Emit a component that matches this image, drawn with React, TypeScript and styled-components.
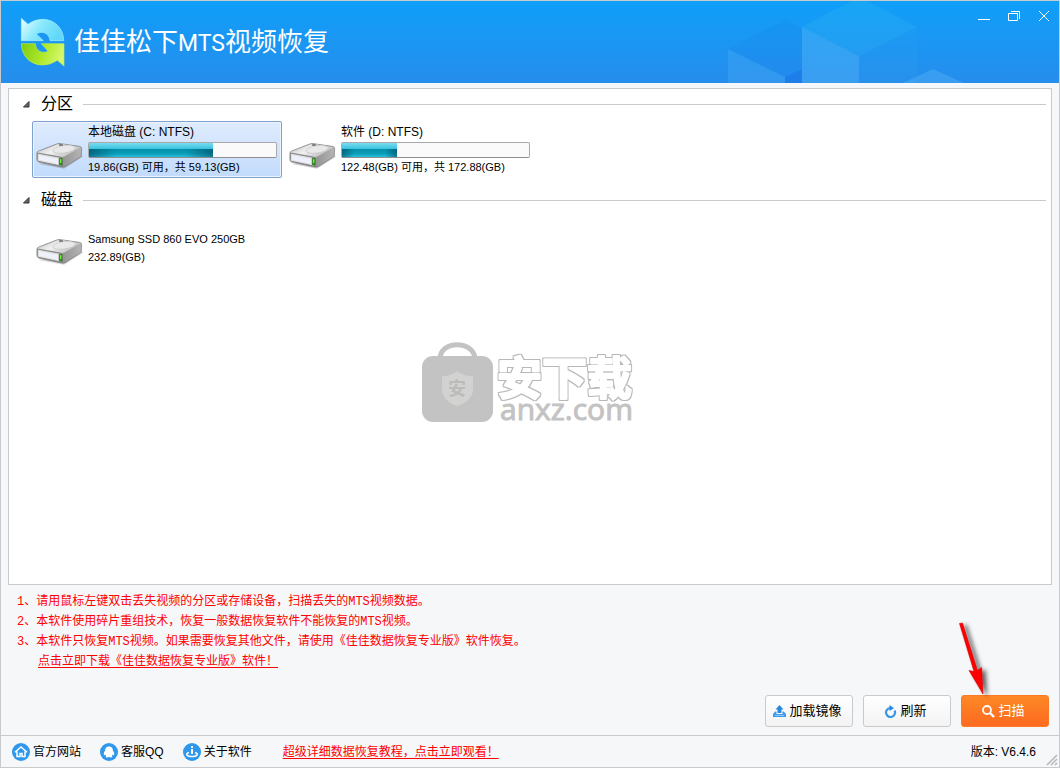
import React, { useState } from "react";
import styled, { createGlobalStyle, css } from "styled-components";

const GlobalStyle = createGlobalStyle`
  *, *::before, *::after { box-sizing: border-box; }
  body {
    margin: 0;
    background: #f6f7f9;
    color: #000;
    font: 12px/18px "Liberation Sans", "Noto Sans CJK SC", sans-serif;
  }
  button { font: inherit; color: inherit; cursor: pointer; }
  h1, h2, p, ol { margin: 0; padding: 0; font-weight: 400; }
  svg { display: block; flex: none; }
`;

const line = "#c8cacd";

const AppWindow = styled.div`
  display: flex;
  flex-direction: column;
  min-height: 100vh;
  border: 1px solid ${line};
`;

const Header = styled.header`
  position: relative;
  display: flex;
  align-items: flex-start;
  justify-content: space-between;
  height: 82px;
  overflow: hidden;
  background: linear-gradient(#0f9ff9, #268dec);
`;

const HeaderArt = styled.svg`
  position: absolute;
  top: 0;
  right: 0;
`;

const Brand = styled.div`
  display: flex;
  align-items: center;
  gap: 8px;
  padding: 15px 0 0 19px;
`;

const Title = styled.h1`
  color: #fff;
  font: 400 26px/48px "Noto Sans CJK SC", sans-serif;
  white-space: nowrap;
`;

const TitleLatin = styled.span`
  font: 400 23px/48px Roboto, sans-serif;
`;

const WindowControls = styled.div`
  position: relative;
  display: flex;
  padding-top: 5px;
`;

const WindowButton = styled.button`
  display: grid;
  place-items: center;
  width: 30px;
  height: 20px;
  padding: 0;
  border: 0;
  background: none;
`;

const Panel = styled.main`
  position: relative;
  flex: 1;
  margin: 5px 7px 0;
  padding: 6px 5px;
  border: 1px solid ${line};
  background: #fff;
`;

const Section = styled.section`
  min-height: 96px;
`;

const SectionHeading = styled.h2`
  display: flex;
  align-items: center;
  font-size: 16px;
  line-height: 18px;
  &::after {
    content: "";
    flex: 1;
    height: 1px;
    margin-left: 10px;
    background: ${line};
  }
`;

const SectionToggle = styled.button`
  display: flex;
  align-items: center;
  gap: 11px;
  padding: 0 0 0 8px;
  border: 0;
  background: none;
`;

const DriveList = styled.div`
  display: flex;
  flex-wrap: wrap;
  gap: 3px;
  padding: 8px 0 0 18px;
`;

const DriveButton = styled.button<{ $selected: boolean }>`
  display: flex;
  align-items: flex-end;
  gap: 5px;
  width: 250px;
  height: 57px;
  padding: 0 4px 0 3px;
  border: 1px solid transparent;
  border-radius: 2px;
  background: none;
  text-align: left;
  & > svg { margin-bottom: 7px; }
  ${(p) =>
    p.$selected &&
    css`
      border-color: #7da2ce;
      background: linear-gradient(#dfebfd, #c2dbfc);
      box-shadow: inset 0 0 0 1px #ebf3fd;
    `}
`;

const DriveInfo = styled.span<{ $compact: boolean }>`
  display: flex;
  flex: 1;
  flex-direction: column;
  gap: 1px;
  padding-bottom: ${(p) => (p.$compact ? 7 : 1)}px;
`;

const DriveText = styled.span<{ $small?: boolean }>`
  font-size: ${(p) => (p.$small ? 11 : 12)}px;
  line-height: 17px;
  white-space: nowrap;
`;

const Meter = styled.span`
  display: block;
  height: 16px;
  border: 1px solid #a9a9a9;
  border-bottom-color: #8e8e8e;
  border-radius: 2px;
  background: #fafafa;
`;

const MeterFill = styled.span`
  display: block;
  height: 100%;
  background:
    linear-gradient(90deg, rgba(0, 55, 80, 0.5), transparent 22%, transparent 78%, rgba(0, 55, 80, 0.5)) 0 100% / 100% 60% no-repeat,
    linear-gradient(#7adcf0, #35c2de 44%, #0790ab 46%, #0a9db8 75%, #28bfdb);
`;

const Watermark = styled.svg`
  position: absolute;
  top: 250px;
  left: 50%;
  margin-left: -110px;
  pointer-events: none;
`;

const Notes = styled.section`
  padding: 7px 17px 0 16px;
  color: #f00;
  font: 12px/20px "Liberation Mono", "Noto Sans CJK SC", monospace;
`;

const NoteList = styled.ol`
  list-style: none;
`;

const RedLink = styled.a<{ $indent?: boolean }>`
  margin-left: ${(p) => (p.$indent ? 21 : 0)}px;
  color: #f00;
  text-underline-offset: 2px;
  white-space: nowrap;
`;

const Actions = styled.div`
  display: flex;
  justify-content: flex-end;
  gap: 10px;
  padding: 23px 10px 8px;
`;

const ActionButton = styled.button<{ $primary?: boolean }>`
  position: relative;
  display: flex;
  align-items: center;
  justify-content: center;
  gap: 3px;
  width: 88px;
  height: 32px;
  padding: 0 3px 0 0;
  border: 1px solid ${(p) => (p.$primary ? "#fd7a22" : line)};
  border-radius: 3px;
  background: ${(p) => (p.$primary ? "linear-gradient(#fd8826, #fd6a20)" : "linear-gradient(#fff, #f3f3f3)")};
  color: ${(p) => (p.$primary ? "#fff" : "#000")};
  font-size: 13px;
  white-space: nowrap;
`;

const Arrow = styled.svg`
  position: absolute;
  top: -75px;
  left: -6px;
  pointer-events: none;
`;

const Footer = styled.footer`
  position: relative;
  display: flex;
  align-items: center;
  height: 32px;
  padding: 0 23px 0 11px;
  border-top: 1px solid ${line};
`;

const FooterNav = styled.nav`
  display: flex;
  gap: 19px;
  margin-right: 31px;
`;

const FooterLink = styled.a`
  display: flex;
  align-items: center;
  gap: 3px;
  color: #000;
  text-decoration: none;
  white-space: nowrap;
`;

const Version = styled.span`
  margin-left: auto;
`;

const Grip = styled.svg`
  position: absolute;
  right: 1px;
  bottom: 1px;
`;

function Logo() {
  return (
    <svg width="46" height="50" viewBox="60 50 138 150" aria-hidden="true">
      <defs>
        <linearGradient id="logoTop" x1="0" y1="0" x2="1" y2="0.4">
          <stop offset="0" stopColor="#eaffff" />
          <stop offset="0.5" stopColor="#8be9fc" />
          <stop offset="1" stopColor="#62d8fb" />
        </linearGradient>
        <linearGradient id="logoBottom" x1="0" y1="0" x2="1" y2="0.2">
          <stop offset="0" stopColor="#7dcb13" />
          <stop offset="0.6" stopColor="#b0e92c" />
          <stop offset="1" stopColor="#d4f76a" />
        </linearGradient>
      </defs>
      <path d="M64 54 84 72Q103 57 128 57C165 57 191 86 191 121H150C149 106 138 96 124 96Q115 96 109 101L130 121H64Z" fill="url(#logoTop)" stroke="#a5f0ff" strokeWidth="2" />
      <path d="M192 197 172 180Q152 194 128 194C91 194 65 167 64 130H106C107 145 117 156 132 156Q140 156 144 152L124 130H192Z" fill="url(#logoBottom)" stroke="#b9ee4c" strokeWidth="2" />
    </svg>
  );
}

function DriveIcon() {
  return (
    <svg width="47" height="28" viewBox="0 -2 141 84" aria-hidden="true">
      <defs>
        <linearGradient id="driveTop" x1="0" y1="0" x2="1" y2="0.5">
          <stop offset="0" stopColor="#c0c0c0" />
          <stop offset="0.5" stopColor="#f0f0f0" />
          <stop offset="1" stopColor="#bdbdbd" />
        </linearGradient>
        <linearGradient id="driveSide" x1="0" y1="0" x2="1" y2="0">
          <stop offset="0" stopColor="#d6d6d6" />
          <stop offset="0.5" stopColor="#8e8e8e" />
          <stop offset="1" stopColor="#b5b5b5" />
        </linearGradient>
      </defs>
      <path d="M8 64 84 78 141 42 136 36Z" fill="#555" opacity=".25" />
      <path d="M3 30Q3 27 8 25L62 4Q68 2 74 3L130 11Q137 12 137 18L136 37Q136 41 131 44L91 70Q84 75 77 73L8 58Q3 56 3 51Z" fill="url(#driveSide)" stroke="#777" strokeWidth="2" />
      <path d="M5 29 64 5Q69 3 75 4L134 14 88 40Q82 44 74 42Z" fill="url(#driveTop)" />
      <ellipse cx="84" cy="20" rx="34" ry="11" transform="rotate(-8 84 20)" fill="#e9e9e9" stroke="#c4c4c4" strokeWidth="2" />
      <ellipse cx="75" cy="7" rx="7" ry="3" fill="#777" />
      <path d="M4 31 78 45V71L7 56Q4 55 4 50Z" fill="#dedede" stroke="#868686" strokeWidth="3" />
      <path d="M9 37 66 48V64L9 52Z" fill="#eef0fa" />
      <path d="M70 47 78 48V68L70 66Z" fill="#24a80e" stroke="#245a1c" strokeWidth="2" />
      <path d="M72 50H76V60H72Z" fill="#7cf44a" />
    </svg>
  );
}

function HomeIcon() {
  return (
    <svg width="18" height="18" viewBox="0 0 18 18" aria-hidden="true">
      <circle cx="9" cy="9" r="9" fill="#2f97ec" />
      <path d="M3 9.200 9 4l6 5.200M5 8.500v5h3v-3h2v3h3v-5" fill="none" stroke="#fff" strokeWidth="1.500" />
    </svg>
  );
}

function PenguinIcon() {
  return (
    <svg width="18" height="18" viewBox="0 0 18 18" aria-hidden="true">
      <circle cx="9" cy="9" r="9" fill="#2f97ec" />
      <path d="M9 3.500C6.200 3.500 5 5.500 5.100 7.700C4 9 3.300 11 4 12.200C4.400 12.400 4.900 12 5.300 11.500C5.500 12.200 5.700 12.600 6.100 13C5.300 13.700 5.700 14.500 7 14.500C8 14.500 8.600 14.300 9 14C9.400 14.300 10 14.500 11 14.500C12.300 14.500 12.700 13.700 11.900 13C12.300 12.600 12.500 12.200 12.700 11.500C13.100 12 13.600 12.400 14 12.200C14.700 11 14 9 12.900 7.700C13 5.500 11.800 3.500 9 3.500Z" fill="#fff" />
    </svg>
  );
}

function AboutIcon() {
  return (
    <svg width="18" height="18" viewBox="0 0 18 18" aria-hidden="true">
      <circle cx="9" cy="9" r="9" fill="#2f97ec" />
      <path d="M8 3h2v2H8ZM8 6h2v5H8Z" fill="#fff" />
      <path d="M6 9.500C2.500 10.500 3 13.500 9 13.500s6.500-3 3-4" fill="none" stroke="#fff" strokeWidth="1.600" />
    </svg>
  );
}

function UploadIcon() {
  return (
    <svg width="13" height="12" viewBox="0 0 13 12" aria-hidden="true">
      <path d="M6.500 0 10.500 4.500H8.500V8H4.500V4.500H2.500Z" fill="#2589e0" />
      <path d="M2.300 6.500H3.500V9H9.500V6.500H10.700L13 9V12H0V9Z" fill="#3c9aea" />
      <path d="M2 10.500H11" stroke="#cbe6fb" strokeWidth=".600" />
    </svg>
  );
}

function RefreshIcon() {
  return (
    <svg width="13" height="13" viewBox="0 0 13 13" aria-hidden="true">
      <path d="M10.600 5.500A4.500 4.500 0 1 1 6 3" fill="none" stroke="#3797e8" strokeWidth="2.200" />
      <path d="M5.500 0 10 3.200 5.500 6Z" fill="#2589e0" />
    </svg>
  );
}

function SearchIcon() {
  return (
    <svg width="13" height="13" viewBox="0 0 13 13" aria-hidden="true">
      <circle cx="5" cy="5" r="4" fill="none" stroke="#fff" strokeWidth="1.800" />
      <path d="M8 8 12 12" stroke="#fff" strokeWidth="2.400" />
    </svg>
  );
}

type Drive = { id: string; name: string; free?: number; total: number };

const partitions: Drive[] = [
  { id: "c", name: "本地磁盘 (C: NTFS)", free: 19.86, total: 59.13 },
  { id: "d", name: "软件 (D: NTFS)", free: 122.48, total: 172.88 },
];

const disks: Drive[] = [{ id: "ssd", name: "Samsung SSD 860 EVO 250GB", total: 232.89 }];

const notes = [
  "1、请用鼠标左键双击丢失视频的分区或存储设备，扫描丢失的MTS视频数据。",
  "2、本软件使用碎片重组技术，恢复一般数据恢复软件不能恢复的MTS视频。",
  "3、本软件只恢复MTS视频。如果需要恢复其他文件，请使用《佳佳数据恢复专业版》软件恢复。",
];

type DriveProps = { drive: Drive; selected: boolean; onSelect: (id: string) => void };

function DriveItem({ drive, selected, onSelect }: DriveProps) {
  const { free, total } = drive;
  return (
    <DriveButton type="button" $selected={selected} aria-pressed={selected} onClick={() => onSelect(drive.id)}>
      <DriveIcon />
      <DriveInfo $compact={free === undefined}>
        <DriveText $small={free === undefined}>{drive.name}</DriveText>
        {free !== undefined && (
          <Meter>
            <MeterFill style={{ width: `${(1 - free / total) * 100}%` }} />
          </Meter>
        )}
        <DriveText $small>{free === undefined ? `${total}(GB)` : `${free}(GB) 可用，共 ${total}(GB)`}</DriveText>
      </DriveInfo>
    </DriveButton>
  );
}

type GroupProps = { title: string; drives: Drive[]; selected: string; onSelect: (id: string) => void };

function DriveGroup({ title, drives, selected, onSelect }: GroupProps) {
  const [open, setOpen] = useState(true);
  return (
    <Section>
      <SectionHeading>
        <SectionToggle type="button" aria-expanded={open} onClick={() => setOpen(!open)}>
          <svg width="8" height="8" viewBox="0 0 8 8" aria-hidden="true">
            <path d="M7 1.500V7H1.500Z" fill="#666" stroke="#333" />
          </svg>
          {title}
        </SectionToggle>
      </SectionHeading>
      {open && (
        <DriveList>
          {drives.map((d) => (
            <DriveItem key={d.id} drive={d} selected={d.id === selected} onSelect={onSelect} />
          ))}
        </DriveList>
      )}
    </Section>
  );
}

export default function App() {
  const [selected, setSelected] = useState("c");
  return (
    <>
      <GlobalStyle />
      <AppWindow>
        <Header>
          <HeaderArt width="359" height="82" viewBox="700 1 359 82" aria-hidden="true">
            <path d="M728 49 785 20 802 28V69L785 77Z" fill="#1b7fe8" opacity=".18" />
            <path d="M728 49 785 77V83H728Z" fill="#5ab4f8" opacity=".25" />
            <path d="M785 77 802 69V83H785Z" fill="#1b78e8" opacity=".7" />
            <path d="M802 27 859-3 917 27 859 56Z" fill="#38bdf2" opacity=".24" />
            <path d="M802 27 859 56V83H802Z" fill="#66c0f8" opacity=".32" />
            <path d="M859 56 917 27V83H859Z" fill="#35a8f4" opacity=".15" />
            <path d="M933 69 964 83H903Z" fill="#60baf8" opacity=".35" />
          </HeaderArt>
          <Brand>
            <Logo />
            <Title>
              佳佳松下<TitleLatin>MTS</TitleLatin>视频恢复
            </Title>
          </Brand>
          <WindowControls>
            <WindowButton type="button" aria-label="最小化">
              <svg width="12" height="12"><path d="M0 9.500H12" stroke="#fff" /></svg>
            </WindowButton>
            <WindowButton type="button" aria-label="还原">
              <svg width="12" height="12"><path d="M.5 3.500H9.500V10.500H.5ZM3 1.500H11.500V9" fill="none" stroke="#fff" /></svg>
            </WindowButton>
            <WindowButton type="button" aria-label="关闭">
              <svg width="12" height="12"><path d="M1 1 11 11M11 1 1 11" stroke="#fff" /></svg>
            </WindowButton>
          </WindowControls>
        </Header>

        <Panel>
          <DriveGroup title="分区" drives={partitions} selected={selected} onSelect={setSelected} />
          <DriveGroup title="磁盘" drives={disks} selected={selected} onSelect={setSelected} />
          <Watermark width="220" height="90" viewBox="420 339 220 90">
            <defs>
              <filter id="outline" x="-5%" y="-5%" width="110%" height="110%">
                <feMorphology in="SourceAlpha" operator="dilate" radius="1" result="grown" />
                <feFlood floodColor="#b8b8b8" />
                <feComposite in2="grown" operator="in" result="edge" />
                <feMerge>
                  <feMergeNode in="edge" />
                  <feMergeNode in="SourceGraphic" />
                </feMerge>
              </filter>
            </defs>
            <path d="M440 359C440 340 474 340 475 359" fill="none" stroke="#c3c3c3" strokeWidth="5" />
            <rect x="422" y="356" width="71" height="66" rx="11" fill="#c3c3c3" />
            <path d="M457 371Q465 377 473 376V390Q472 401 457 406Q443 401 442 390V376Q450 377 457 371Z" fill="#d2d3d0" />
            <text x="457" y="395" textAnchor="middle" fill="#bbb" fontFamily="Noto Sans CJK SC, sans-serif" fontWeight="700" fontSize="18">安</text>
            <text x="497" y="395" fill="#fff" stroke="#fff" strokeWidth="2" strokeLinejoin="round" filter="url(#outline)" fontFamily="Noto Sans CJK SC, sans-serif" fontWeight="700" fontSize="45">安下载</text>
            <text x="500" y="420" fill="#c3c3c3" stroke="#c3c3c3" strokeWidth="1" fontFamily="Open Sans, sans-serif" fontWeight="400" fontSize="30">anxz.com</text>
          </Watermark>
        </Panel>

        <Notes>
          <NoteList>
            {notes.map((n) => (
              <li key={n}>{n}</li>
            ))}
          </NoteList>
          <RedLink href="#download" $indent>点击立即下载《佳佳数据恢复专业版》软件！</RedLink>
        </Notes>

        <Actions>
          <ActionButton type="button"><UploadIcon />加载镜像</ActionButton>
          <ActionButton type="button"><RefreshIcon />刷新</ActionButton>
          <ActionButton type="button" $primary>
            <SearchIcon />扫描
            <Arrow width="42" height="80" viewBox="956 621 42 80" aria-hidden="true">
              <defs>
                <filter id="arrowShadow" x="-50%" y="-20%" width="220%" height="150%">
                  <feDropShadow dx="4" dy="2" stdDeviation="2" floodColor="#000" floodOpacity=".6" />
                </filter>
              </defs>
              <path d="M959.500 623.500 962.500 623 977.500 670.500 981.500 667.500 983 694 969 670.500 974 671.500Z" fill="#f00" stroke="#d00000" strokeWidth=".600" filter="url(#arrowShadow)" />
            </Arrow>
          </ActionButton>
        </Actions>

        <Footer>
          <FooterNav>
            <FooterLink href="#site"><HomeIcon />官方网站</FooterLink>
            <FooterLink href="#qq"><PenguinIcon />客服QQ</FooterLink>
            <FooterLink href="#about"><AboutIcon />关于软件</FooterLink>
          </FooterNav>
          <RedLink href="#tutorial">超级详细数据恢复教程，点击立即观看！</RedLink>
          <Version>版本: V6.4.6</Version>
          <Grip width="12" height="12" viewBox="0 0 12 12" aria-hidden="true">
            <path d="M1 11 11 1M5 11 11 5M9 11 11 9" stroke="#b4b6ba" strokeWidth="1.500" />
          </Grip>
        </Footer>
      </AppWindow>
    </>
  );
}
